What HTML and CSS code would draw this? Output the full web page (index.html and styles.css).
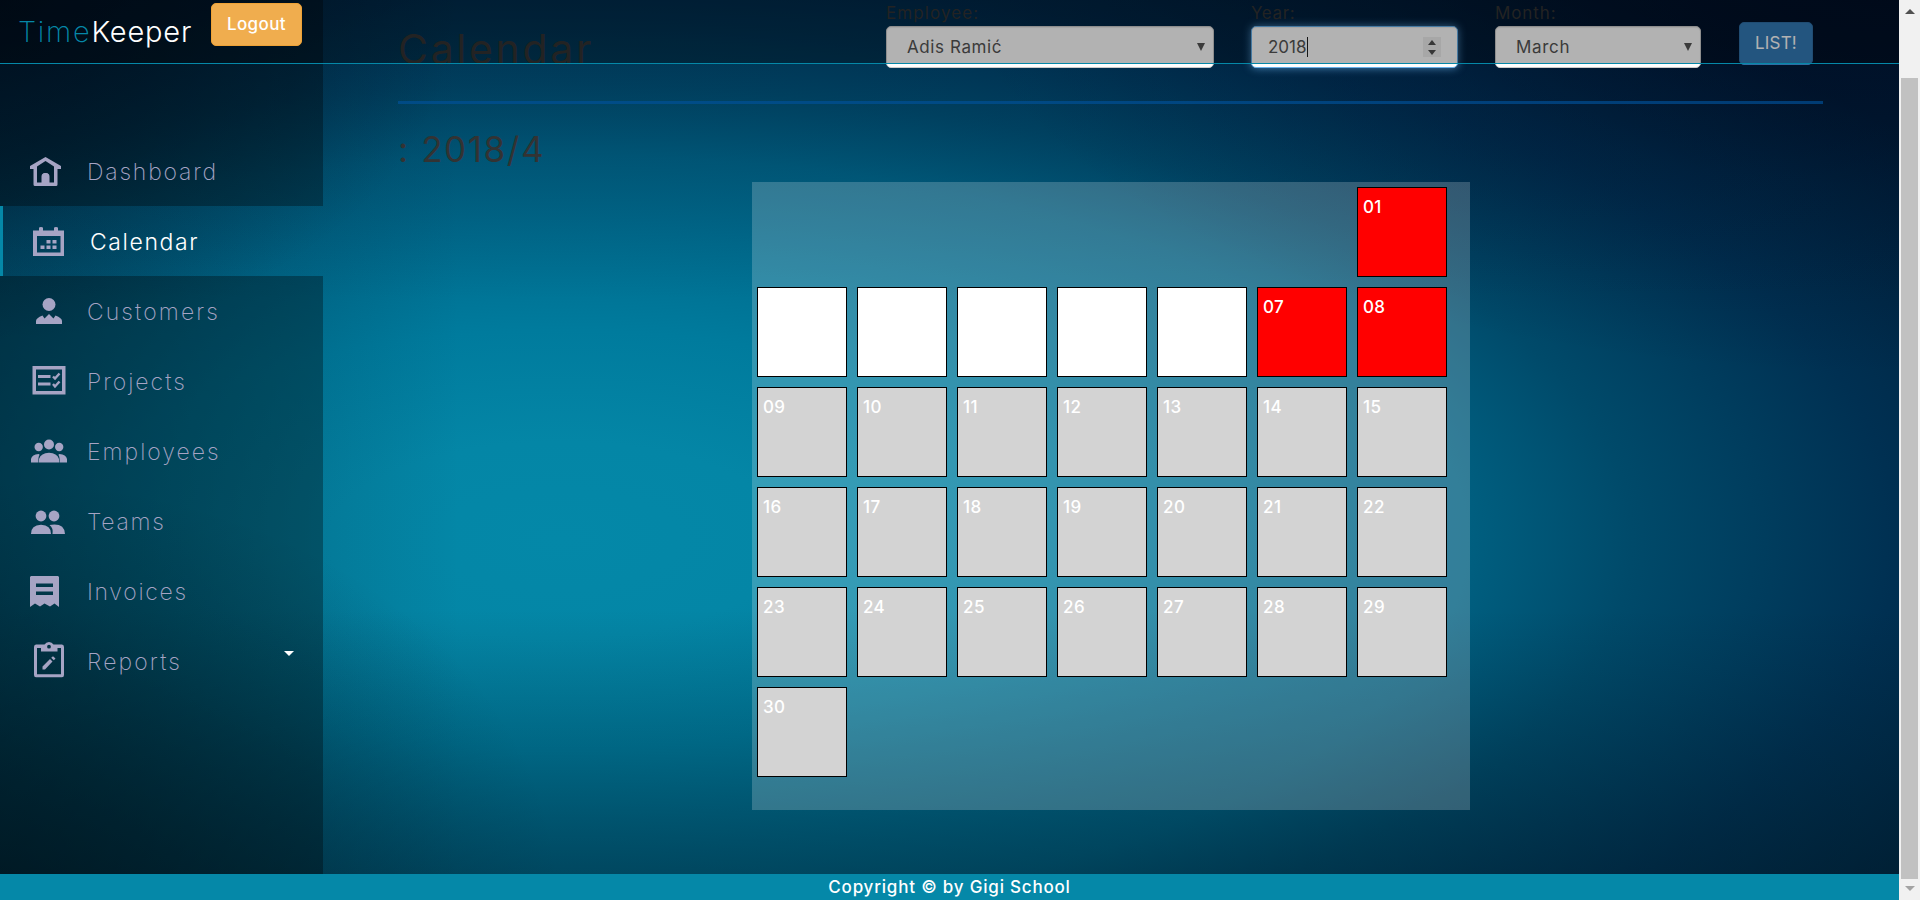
FILE: index.html
```html
<!DOCTYPE html>
<html lang="en">
<head>
<meta charset="utf-8">
<title>TimeKeeper</title>
<link rel="stylesheet" href="styles.css">
</head>
<body>
<div class="window">
  <div class="page">
    <header class="topbar">
      <div class="brand"><span class="brand-time">Time</span><span class="brand-keeper">Keeper</span></div>
      <button class="logout">Logout</button>
    </header>
    <div class="body">
      <nav class="sidebar">
        <div class="side-top"></div>
        <a class="item"><svg class="icon" viewBox="0 0 88 70"><path fill-rule="evenodd" d="M45.500 21L61 30V33H57.500V48.500Q57.500 50 56 50H35Q33.500 50 33.500 48.500V33H30V30ZM45.500 25L37 30.500V46.500H41.500V40.500Q41.500 37 45.500 37T49.500 40.500V46.500H54V30.500Z"/><path d="M42 47V40.500Q42 37 45.500 37T49 40.500V47Z"/></svg><span class="t-dashboard">Dashboard</span></a>
        <a class="item active"><svg class="icon" viewBox="3 0 88 70"><path fill-rule="evenodd" d="M33 24.500H39V22Q39 21 41 21T43 22V24.500H54V22Q54 21 56 21T58 22V24.500H64V50H33ZM37 30V46.500H60.500V30Z"/><path d="M46.500 34h4v3.500h-4zM52.500 34h4v3.500h-4zM40.500 39.500h4v3.500h-4zM46.500 39.500h4v3.500h-4zM52.500 39.500h4v3.500h-4z"/></svg><span class="t-calendar">Calendar</span></a>
        <a class="item"><svg class="icon" viewBox="0 0 88 70"><circle cx="49" cy="28.500" r="6.500"/><path d="M36 48V45Q36 42 42.500 39.500L44.500 42.500L49 38L53.500 42.500L55.500 39.500Q62 42 62 45V48Z"/></svg><span class="t-customers">Customers</span></a>
        <a class="item"><svg class="icon" viewBox="0 0 88 70"><path fill-rule="evenodd" d="M32.500 20H65.500V48.500H32.500ZM36 23.500V45H62V23.500Z"/><path d="M38 29h12.500v3H38zM38 36.500h12.500v3H38z"/><path class="line" d="M53 30.500L55 32.500L59.500 27.500M53 38L55 40.500L59.500 35.500"/></svg><span class="t-projects">Projects</span></a>
        <a class="item"><svg class="icon" viewBox="0 0 88 70"><circle cx="49" cy="28.500" r="5"/><circle cx="38.700" cy="31" r="4.200"/><circle cx="59.200" cy="31" r="4.200"/><path d="M39 46.500V43Q41 37 49 36.800Q57 37 59 43V46.500ZM31 46.500V43Q32 38.500 38.500 38Q39.500 38 39.500 39Q38 41 38.500 46.500ZM67 46.500V43Q66 38.500 59.500 38Q58.500 38 58.500 39Q60 41 59.500 46.500Z"/></svg><span class="t-employees">Employees</span></a>
        <a class="item"><svg class="icon" viewBox="0 0 88 70"><circle cx="41" cy="30" r="5.400"/><circle cx="54" cy="30" r="5.400"/><path d="M31 48Q31 39 41 38.800Q51 39 51 48ZM49.500 39Q64.500 36.500 65 48H52.500Q53.500 42 49.500 39Z"/></svg><span class="t-teams">Teams</span></a>
        <a class="item"><svg class="icon" viewBox="0 0 88 70"><path fill-rule="evenodd" d="M31 20H58L59 21V51L54.500 47.500L50 50.500L44.500 47.500L40 50.500L35 47.500L30 51V21ZM36 27.500V31H53V27.500ZM36 35.500V39H53V35.500Z"/></svg><span class="t-invoices">Invoices</span></a>
        <a class="item"><svg class="icon" viewBox="0 0 88 70"><path fill-rule="evenodd" d="M36 18.500H44.500Q46 16 49 16T53.500 18.500H62Q64 18.500 64 21V49Q64 51.200 62 51.200H36Q34 51.200 34 49V21Q34 18.500 36 18.500ZM37 22V48.200H61V22H57.500V25.500H41V22ZM49 18.800A1.900 1.900 0 1 0 49 22.600A1.900 1.900 0 1 0 49 18.800Z"/><path d="M42.500 43.500V40.500L50 33L52.500 35.500L45 43.500ZM51.200 31.800L53 30.300L55.500 32.500L53.800 34.300Z"/></svg><span class="t-reports">Reports</span><i class="caret"></i></a>
        <div class="side-fill"></div>
      </nav>
      <main class="content">
        <div class="filters">
          <h1 class="title">Calendar</h1>
          <div class="field employee"><label>Employee:</label><div class="control"><span class="v-name">Adis Ramić</span><i class="arrow"></i></div></div>
          <div class="field year"><label>Year:</label><div class="control focused"><span class="v-year">2018</span><i class="cursor"></i><div class="spinner"><i class="up"></i><i class="down"></i></div></div></div>
          <div class="field month"><label>Month:</label><div class="control"><span class="v-month">March</span><i class="arrow"></i></div></div>
          <button class="list">LIST!</button>
        </div>
        <hr class="rule">
        <h2 class="period">: 2018/4</h2>
        <div class="calendar">
          <div class="day red first">01</div>
          <div class="day blank"></div><div class="day blank"></div><div class="day blank"></div><div class="day blank"></div><div class="day blank"></div><div class="day red">07</div><div class="day red">08</div>
          <div class="day">09</div><div class="day">10</div><div class="day">11</div><div class="day">12</div><div class="day">13</div><div class="day">14</div><div class="day">15</div>
          <div class="day">16</div><div class="day">17</div><div class="day">18</div><div class="day">19</div><div class="day">20</div><div class="day">21</div><div class="day">22</div>
          <div class="day">23</div><div class="day">24</div><div class="day">25</div><div class="day">26</div><div class="day">27</div><div class="day">28</div><div class="day">29</div>
          <div class="day">30</div>
        </div>
      </main>
    </div>
    <footer class="footer"><span>Copyright © by Gigi School</span></footer>
  </div>
  <div class="scrollbar"><i class="sb-up"></i><div class="thumb"></div><i class="sb-down"></i></div>
</div>
</body>
</html>
```
FILE: styles.css
```css
* { box-sizing: border-box; }
body { margin: 0; font-family: Inter, "Open Sans", sans-serif; overflow: hidden; }
h1, h2 { margin: 0; font-weight: 400; }
button { font-family: inherit; }

.window { display: flex; width: 1920px; height: 900px; }
.page {
  position: relative;
  display: flex;
  flex-direction: column;
  width: 1899px;
  height: 900px;
  background:
    linear-gradient(0deg, rgba(0, 28, 40, .42) 26px, rgba(0, 28, 40, 0) 290px),
    linear-gradient(180deg, rgba(0, 20, 48, .3), rgba(0, 20, 48, 0) 300px),
    radial-gradient(ellipse 560px 420px at 0 100%, rgba(0, 20, 28, .45), rgba(0, 30, 36, 0) 100%),
    radial-gradient(ellipse 460px 340px at 0 0, rgba(0, 10, 24, .5), rgba(0, 16, 34, 0) 100%),
    linear-gradient(90deg, rgba(0, 24, 44, .36), rgba(0, 24, 44, 0) 460px),
    radial-gradient(ellipse 950px 420px at 100% -5%, rgba(0, 2, 20, .7), rgba(0, 10, 32, .25) 55%, rgba(0, 16, 40, 0) 100%),
    radial-gradient(ellipse 1650px 700px at 560px 540px, #0488a8 0%, #0486a6 14%, #007b9d 30%, #006a8c 45%, #005f80 55%, #004a6a 65%, #003052 81%, #001d36 100%);
}

.topbar {
  position: absolute;
  inset: 0 0 auto 0;
  z-index: 2;
  display: flex;
  align-items: flex-start;
  height: 64px;
  background: rgba(0, 0, 0, .3);
  border-bottom: 1px solid #0588a8;
}
.brand { width: 211px; padding: 14px 0 0 18px; font-size: 29px; line-height: 35px; font-weight: 300; white-space: nowrap; }
.brand-time { color: #0588a8; font-weight: 200; letter-spacing: 1.7px; }
.brand-keeper { color: #fff; letter-spacing: .8px; }
.logout {
  width: 91px; height: 43px; margin-top: 3px; padding: 0 0 2px;
  font-size: 17px; font-weight: 500; color: #fff; letter-spacing: .4px;
  background: #f0ad4e; border: 1px solid #eea236; border-radius: 5px;
}

.body { display: flex; height: 874px; }
.sidebar { display: flex; flex-direction: column; width: 323px; }
.side-top, .side-fill, .item { background: rgba(0, 0, 0, .32); }
.side-top { height: 136px; }
.side-fill { flex: 1; }
.item {
  display: flex; align-items: center; height: 70px;
  color: #a6a4c4; font-size: 23px; font-weight: 200; line-height: 30px; letter-spacing: 2px;
}
.item span { padding-top: 2px; margin-left: -1px; }
.item.active { background: none; color: #fff; border-left: 3px solid #0588a8; font-weight: 300; }
.item .t-dashboard { letter-spacing: 1.8px; }
.item .t-calendar { letter-spacing: 1.6px; }
.item .t-teams, .item .t-invoices { letter-spacing: 1.7px; }
.item .t-customers, .item .t-reports { letter-spacing: 2.1px; }
.icon { width: 88px; height: 70px; fill: #a6a4c4; }
.icon .line { fill: none; stroke: #a6a4c4; stroke-width: 2.4; }
.caret { margin-right: 29px; margin-left: auto; border: 5px solid transparent; border-top-color: #fff; border-bottom: 0; }
.item .caret { margin-top: -16px; }

.content { width: 1576px; padding: 0 76px 0 75px; }
.filters { display: flex; height: 101px; }
.title { width: 488px; padding: 23px 0 0 0; font-size: 41px; line-height: 52px; letter-spacing: 2.7px; color: #333; }
.field { font-size: 17px; color: #333; }
.field label { display: block; height: 26px; line-height: 27px; letter-spacing: 1.1px; }
.year label { letter-spacing: .6px; }
.month label { letter-spacing: .9px; }
.employee { width: 328px; margin-right: 37px; }
.year { width: 207px; margin-right: 37px; }
.month { width: 206px; margin-right: 38px; }
.control {
  display: flex; align-items: center; height: 42px; padding: 0 8px 0 20px;
  background: #fff; border: 1px solid #ccc; border-radius: 5px; color: #555;
  box-shadow: inset 0 1px 1px rgba(0, 0, 0, .075);
}
.v-name { letter-spacing: .6px; }
.v-month { letter-spacing: .7px; }
.year .control { padding: 0 15px 0 16px; }
.control.focused { border-color: #66afe9; box-shadow: inset 0 1px 1px rgba(0, 0, 0, .075), 0 0 9px rgba(102, 175, 233, .7); }
.arrow { margin-left: auto; border: 4px solid transparent; border-top: 8px solid #555; border-bottom: 0; }
.cursor { width: 1px; height: 20px; background: #222; }
.spinner { display: flex; flex-direction: column; justify-content: center; align-items: center; gap: 5px; width: 18px; height: 20px; margin-left: auto; margin-right: 1px; background: #efefef; }
.up, .down { border: 4px solid transparent; }
.up { border-top: 0; border-bottom: 5px solid #505050; }
.down { border-bottom: 0; border-top: 5px solid #505050; }
.list {
  width: 74px; height: 43px; margin-top: 22px; padding: 0 0 1px;
  font-size: 17px; font-weight: 400; color: #fff; letter-spacing: .2px;
  background: #337ab7; border: 1px solid #2e6da4; border-radius: 5px;
}
.rule { width: 1425px; height: 3px; margin: 0; border: 0; background: rgba(0, 82, 155, .65); }
.period { height: 78px; padding: 23px 0 0 0; font-size: 35px; line-height: 44px; letter-spacing: 1.6px; color: #333; }
.calendar {
  display: grid; grid-template-columns: repeat(7, 90px); grid-auto-rows: 90px; gap: 10px; align-content: start;
  width: 718px; height: 628px; margin-left: 354px; padding: 5px;
  background: rgba(255, 255, 255, .2);
}
.day { padding: 8px 0 0 5px; font-size: 17px; line-height: 22px; font-weight: 500; letter-spacing: .4px; color: #fff; background: #d3d3d3; border: 1px solid #000; }
.red { background: #f00; }
.blank { background: #fff; }
.first { grid-column: 7; }

.footer { height: 26px; padding-top: 1px; background: #0588a8; color: #fff; font-size: 17px; line-height: 24px; font-weight: 500; letter-spacing: .8px; text-align: center; }

.scrollbar { display: flex; flex-direction: column; align-items: center; width: 21px; background: #f1f1f1; }
.sb-up { height: 5px; margin: 9px 0 64px; border: 5px solid transparent; border-top: 0; border-bottom-color: #505050; }
.thumb { width: 17px; height: 801px; background: #c1c1c1; }
.sb-down { margin-top: 7px; border: 5px solid transparent; border-bottom: 0; border-top-color: #a3a3a3; }
```
